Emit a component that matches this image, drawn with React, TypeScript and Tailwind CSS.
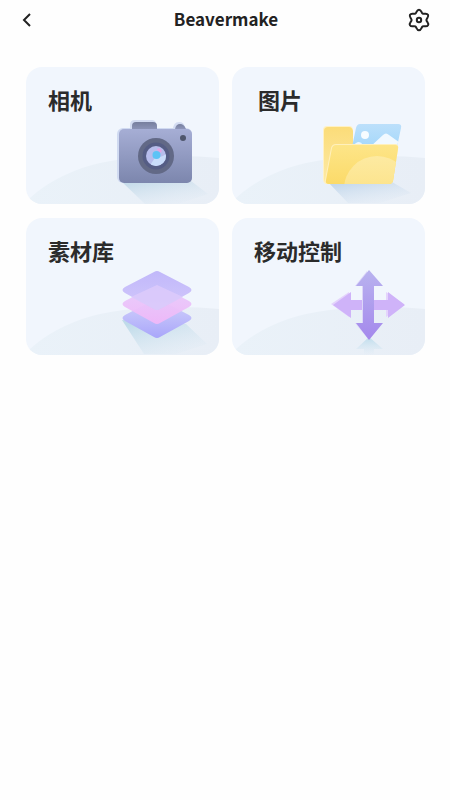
import type { ReactNode } from "react";

type Feature = Readonly<{
  art: ReactNode;
  id: string;
  label: string;
  padding: string;
}>;

function Stops({ from, to, fade = false }: Readonly<{ from: string; to: string; fade?: boolean }>) {
  return (
    <>
      <stop offset="0" stopColor={from} />
      <stop offset="1" stopColor={to} stopOpacity={fade ? 0 : 1} />
    </>
  );
}

function CameraArt() {
  return (
    <>
      <defs>
        <linearGradient id="camBody" x1="0" x2="0" y1="0" y2="1">
          <Stops from="#a6aed5" to="#7c86ad" />
        </linearGradient>
        <linearGradient id="camTop" x1="0" x2="0" y1="0" y2="1">
          <Stops from="#777f9e" to="#8e96ba" />
        </linearGradient>
        <linearGradient id="camShadow" x1="0.1" x2="0.8" y1="0.1" y2="1.1">
          <Stops fade from="#c6dcea" to="#dfe9f4" />
        </linearGradient>
        <clipPath id="camGlass">
          <circle cx="130" cy="89" r="10" />
        </clipPath>
      </defs>
      <path d="M95 114L119 137H152L182 127L165 114Z" fill="url(#camShadow)" />
      <path d="M104 63V58Q104 53 109 53H126Q129 53 130 56L131 63Z" fill="#d3dcf2" />
      <path d="M147 63Q147 55 153 55Q158 55 159 60L158 63Z" fill="#d3dcf2" />
      <rect fill="#d0daf1" height="55" rx="6" width="75" x="91" y="61" />
      <path d="M106 63V59Q106 55 110 55H127Q131 55 131 59V63Z" fill="url(#camTop)" />
      <path d="M149 62Q150 57 154 57Q158 57 160 62Z" fill="url(#camTop)" />
      <rect fill="url(#camBody)" height="54" rx="5" width="73" x="93" y="62" />
      <circle cx="157" cy="71" fill="#4f566c" r="3" />
      <circle cx="130" cy="89" fill="#626986" r="18" />
      <circle cx="130" cy="89" fill="#555d85" r="13.5" />
      <g clipPath="url(#camGlass)">
        <rect fill="#b7bdec" height="20" width="20" x="120" y="79" />
        <path d="M130 89L123 100H142V85Q136 92 130 89Z" fill="#c9dcfa" />
        <path d="M131 82Q134 80 136 84L133 87Z" fill="#e3a3e2" />
        <circle cx="130.500" cy="88" fill="#5cc3f5" r="4" />
      </g>
    </>
  );
}

function FolderArt() {
  return (
    <>
      <defs>
        <linearGradient id="folderBack" x1="0" x2="0" y1="0" y2="1">
          <Stops from="#fbdc79" to="#fdeaa6" />
        </linearGradient>
        <linearGradient id="folderFront" x1="0" x2="0" y1="0" y2="1">
          <Stops from="#fde588" to="#fbda68" />
        </linearGradient>
        <linearGradient id="folderArc" x1="0" x2="0" y1="0" y2="1">
          <Stops from="#fdeaa2" to="#fbdd74" />
        </linearGradient>
        <linearGradient id="folderPhoto" x1="0" x2="0" y1="0" y2="1">
          <Stops from="#bde0fb" to="#a3d7fa" />
        </linearGradient>
        <linearGradient id="folderShadow" x1="0.1" x2="0.8" y1="0.1" y2="1.1">
          <Stops fade from="#c4d8eb" to="#dce7f4" />
        </linearGradient>
        <clipPath id="folderFace">
          <path d="M104 78H163Q167 78 166 82L161 114Q160 117 157 117H97Q93 117 94 113L100 81Q101 78 104 78Z" />
        </clipPath>
        <clipPath id="photoFace">
          <path d="M128 57H166Q170 57 169 61L165 80H120L124 61Q125 57 128 57Z" />
        </clipPath>
      </defs>
      <path d="M96 115L116 136H148L179 126L160 115Z" fill="url(#folderShadow)" />
      <path d="M95 59H117Q121 59 121 63V117H95Q91 117 91 112V63Q91 59 95 59Z" fill="#fff1c4" />
      <path d="M96 60H117Q120 60 121 64V116H96Q92 116 92 112V64Q92 60 96 60Z" fill="url(#folderBack)" />
      <g clipPath="url(#photoFace)">
        <rect fill="url(#folderPhoto)" height="26" width="54" x="118" y="56" />
        <circle cx="133" cy="68" fill="#f7fcff" r="4" />
        <path d="M120 80Q127 71 131 78V80Z" fill="#e9f6ff" />
        <path d="M138 80L151 68Q154 65 157 68L171 78V82H138Z" fill="#f1f9ff" />
      </g>
      <path
        d="M104 77H163Q167 77 166 82L161 114Q160 117 157 117H96Q92 117 93 113L99 81Q100 77 104 77Z"
        fill="#fff0bc"
      />
      <g clipPath="url(#folderFace)">
        <rect fill="url(#folderFront)" height="40" width="75" x="93" y="78" />
        <circle cx="145" cy="122" fill="url(#folderArc)" r="33" />
      </g>
    </>
  );
}

function LayersArt() {
  return (
    <>
      <defs>
        <linearGradient id="layerTop" x1="0" x2="0" y1="0" y2="1">
          <Stops from="#c1b8fa" to="#d2c8fb" />
        </linearGradient>
        <linearGradient id="layerMid" x1="0" x2="0" y1="0" y2="1">
          <Stops from="#e6ccfb" to="#f0b8f8" />
        </linearGradient>
        <linearGradient id="layerLow" x1="0" x2="0" y1="0" y2="1">
          <Stops from="#d3d3fb" to="#a9a6fa" />
        </linearGradient>
        <linearGradient id="layerShadow" x1="0.1" x2="0.8" y1="0.1" y2="1.1">
          <Stops fade from="#bfdbe9" to="#dae8f3" />
        </linearGradient>
        <path
          d="M134 1L163 16Q168 19 163 22L134 38Q131 40 128 38L99 22Q94 19 99 16L128 1Q131 -1 134 1Z"
          id="layerTile"
        />
      </defs>
      <path d="M96 102L118 136H150L181 126L160 106Z" fill="url(#layerShadow)" />
      <use fill="url(#layerLow)" href="#layerTile" y="81" />
      <use fill="url(#layerMid)" href="#layerTile" opacity="0.95" y="67" />
      <use fill="url(#layerTop)" href="#layerTile" y="53" />
      <path d="M131 67L157 79L134 91Q131 93 128 91L105 79Z" fill="#ddcbfb" opacity="0.8" />
    </>
  );
}

function MoveArt() {
  return (
    <>
      <defs>
        <linearGradient id="moveUp" x1="0" x2="0" y1="0" y2="1">
          <Stops from="#b9b3ef" to="#a488ec" />
        </linearGradient>
        <linearGradient id="moveShadow" x1="0" x2="0" y1="0" y2="1">
          <Stops fade from="#bddcec" to="#d4e6f2" />
        </linearGradient>
      </defs>
      <path d="M137 119L151 131H142V137H132V131H124Z" fill="url(#moveShadow)" />
      <path d="M99 86L117 74V82H154V74L172 86L154 99V92H117V99Z" fill="#e4d3fc" />
      <path d="M101 87L119 74V82H156V74L173 87L156 100V92H119V100Z" fill="#cfb3f9" />
      <path d="M135 53L123 68H130V105H123L136 121Z" fill="#dcd6f8" />
      <path d="M137 52L151 68H142V105H151L137 122L124 105H131V68H124Z" fill="url(#moveUp)" />
    </>
  );
}

const features: Feature[] = [
  { art: <CameraArt />, id: "camera", label: "相机", padding: "pl-[22px]" },
  { art: <FolderArt />, id: "pictures", label: "图片", padding: "pl-[26px]" },
  { art: <LayersArt />, id: "materials", label: "素材库", padding: "pl-[22px]" },
  { art: <MoveArt />, id: "motion", label: "移动控制", padding: "pl-[22px]" },
];

function FeatureCard({ art, id, label, padding }: Feature) {
  return (
    <button
      className={`relative flex h-[137px] items-start overflow-hidden rounded-2xl bg-[#f1f6fd] pt-4 text-left ${padding}`}
      type="button"
    >
      <svg
        aria-hidden="true"
        className="absolute inset-0 h-full w-full"
        preserveAspectRatio="xMaxYMax slice"
        viewBox="0 0 193 137"
      >
        <defs>
          <linearGradient id={`${id}Hill`} x1="0" x2="1" y1="0" y2="0">
            <Stops from="#eaf2f9" to="#e8eef6" />
          </linearGradient>
        </defs>
        <path d="M0 135Q20 114 56 101Q92 89 150 89Q174 89 193 91V137H0Z" fill={`url(#${id}Hill)`} />
        {art}
      </svg>
      <span className="relative text-[22px] leading-8 font-bold text-[#2b2b2b]">{label}</span>
    </button>
  );
}

function SettingsIcon() {
  return (
    <svg
      aria-hidden="true"
      className="size-6"
      fill="none"
      stroke="currentColor"
      strokeWidth="2"
      viewBox="-12 -12 24 24"
    >
      <path d="M0-10.300C2.500-10.300 2.200-7.300 3.700-6.400C5.200-5.500 7.700-7.400 9-5.200C10.200-3 7.400-1.700 7.400 0C7.400 1.700 10.200 3 9 5.200C7.700 7.400 5.200 5.500 3.700 6.400C2.200 7.300 2.500 10.300 0 10.300C-2.500 10.300-2.200 7.300-3.700 6.400C-5.200 5.500-7.700 7.400-9 5.200C-10.200 3-7.400 1.700-7.400 0C-7.400-1.700-10.200-3-9-5.200C-7.700-7.400-5.200-5.500-3.700-6.400C-2.200-7.300-2.500-10.300 0-10.300Z" />
      <circle r="2.200" />
    </svg>
  );
}

export default function App() {
  return (
    <div className="min-h-screen bg-[#fefefe] font-['Noto_Sans_CJK_SC',sans-serif] text-[#222222]">
      <header className="grid h-10 grid-cols-[1fr_auto_1fr] items-center pr-[19px] pl-[21px]">
        <button aria-label="Back" className="justify-self-start" type="button">
          <svg
            aria-hidden="true"
            className="h-4 w-3"
            fill="none"
            stroke="currentColor"
            strokeWidth="2"
            viewBox="0 0 12 16"
          >
            <path d="M9 2L3 8L9 14" />
          </svg>
        </button>
        <h1 className="pb-0.5 text-[17px] leading-6 font-bold">Beavermake</h1>
        <button aria-label="Settings" className="justify-self-end" type="button">
          <SettingsIcon />
        </button>
      </header>
      <main className="grid grid-cols-2 gap-x-[13px] gap-y-[14px] pt-[27px] pr-[25px] pl-[26px]">
        {features.map((feature) => (
          <FeatureCard key={feature.id} {...feature} />
        ))}
      </main>
    </div>
  );
}
